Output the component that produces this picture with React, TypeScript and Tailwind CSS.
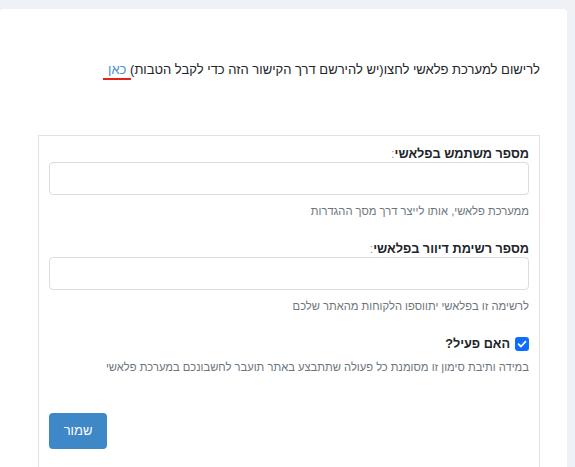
import React, { useState } from 'react';

const App: React.FC = () => {
  const [active, setActive] = useState(true);

  return (
    <div
      dir="rtl"
      className="min-h-screen bg-[#eef1f6] pt-[9px] pr-[8px] text-[#212529] font-['Liberation_Sans',Arial,'DejaVu_Sans',sans-serif]"
    >
      <div className="bg-white rounded-[4px] min-h-[470px] pr-[27px] pl-[38px] pt-[51px]">
        <p className="text-[13px] leading-[20px]">
          לרישום למערכת פלאשי לחצו(יש להירשם דרך הקישור הזה כדי לקבל הטבות){' '}
          <a href="#" className="text-[#4a90d9] border-b-2 border-[#e4231b] pb-[1px] px-[5px] -mx-[5px]">
            כאן
          </a>
        </p>

        <div className="mt-[55px] border border-[#e2e2e2] border-b-0 px-[10px] pt-[10px] pb-[40px]">
          <label className="block text-[12.7px] leading-[16px] font-bold">
            מספר משתמש בפלאשי<span className="text-[#9aa0a6] font-normal">:</span>
          </label>
          <input
            type="text"
            className="block w-full h-[33px] border border-[#dcdcdc] rounded-[4px] px-3 outline-none"
          />
          <p className="mt-[7px] text-[11.2px] leading-[18px] text-[#6c757d]">
            ממערכת פלאשי, אותו לייצר דרך מסך ההגדרות
          </p>

          <label className="block mt-[21px] text-[12.7px] leading-[16px] font-bold">
            מספר רשימת דיוור בפלאשי<span className="text-[#9aa0a6] font-normal">:</span>
          </label>
          <input
            type="text"
            className="block w-full h-[33px] border border-[#dcdcdc] rounded-[4px] px-3 outline-none"
          />
          <p className="mt-[7px] text-[11.2px] leading-[18px] text-[#6c757d]">
            לרשימה זו בפלאשי יתווספו הלקוחות מהאתר שלכם
          </p>

          <label
            className="mt-[21px] flex items-center gap-[5px] text-[12.7px] leading-[16px] font-bold cursor-pointer"
            onClick={() => setActive(!active)}
          >
            <span
              className={`w-[14px] h-[14px] rounded-[3px] flex items-center justify-center ${
                active ? 'bg-[#0d6efd]' : 'bg-white border border-[#8f959b]'
              }`}
            >
              {active && (
                <svg width="10" height="10" viewBox="0 0 10 10" fill="none">
                  <path d="M1.6 5.2 L4 7.5 L8.5 2.6" stroke="white" strokeWidth="1.8" strokeLinecap="round" strokeLinejoin="round" />
                </svg>
              )}
            </span>
            האם פעיל?
          </label>
          <p className="mt-[6px] text-[11.2px] leading-[18px] text-[#6c757d] whitespace-nowrap">
            במידה ותיבת סימון זו מסומנת כל פעולה שתתבצע באתר תועבר לחשבונכם במערכת פלאשי
          </p>

          <div className="flex justify-end mt-[37px]">
            <button className="w-[58px] h-[36px] bg-[#3f88c8] text-white text-[13px] rounded-[4px]">
              שמור
            </button>
          </div>
        </div>
      </div>
    </div>
  );
};

export default App;
